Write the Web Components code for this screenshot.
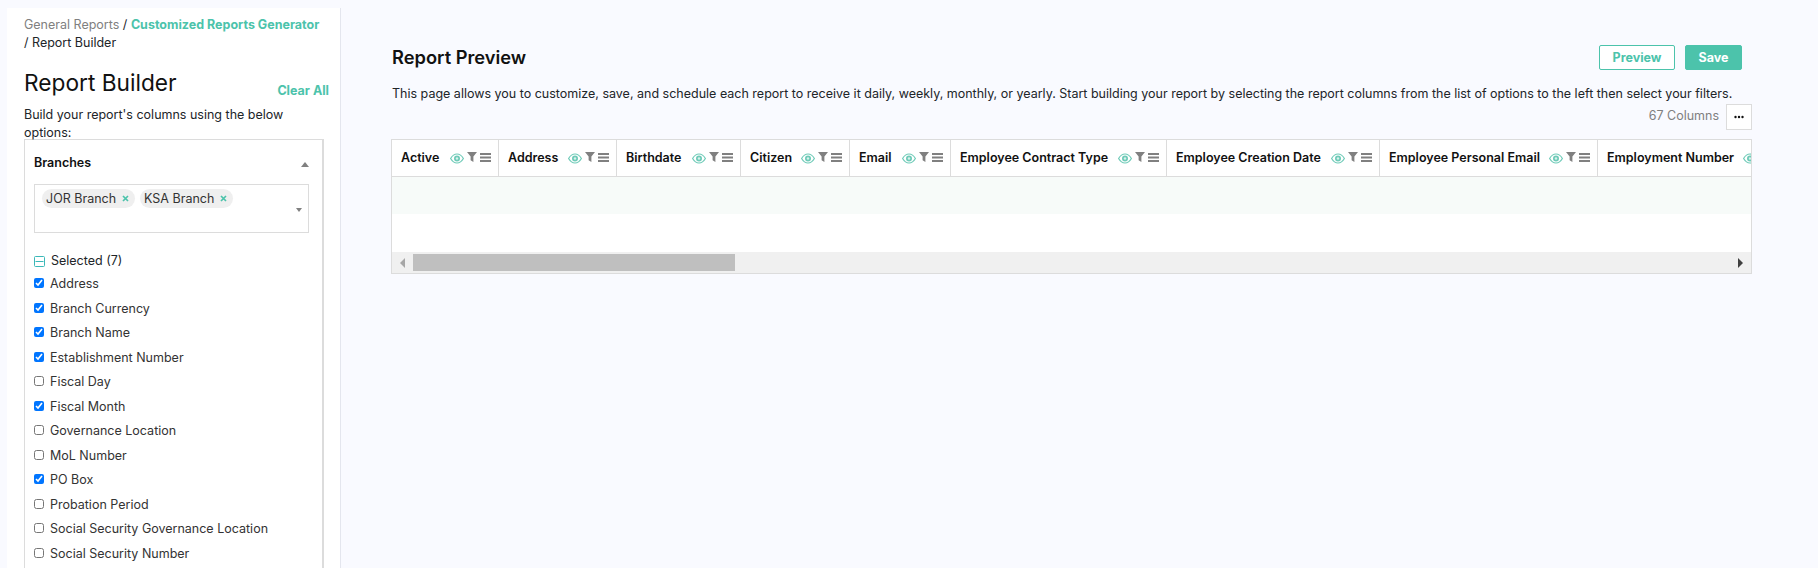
<!DOCTYPE html>
<html>
<head>
<meta charset="utf-8">
<title>Report Builder</title>
<style>
  html, body { height: 100%; overflow: hidden; }
  body {
    margin: 0;
    background: #f9faff;
    color: #212529;
    font: 12.5px/18px Inter, "Liberation Sans", sans-serif;
  }
</style>
</head>
<body>
<report-page>
  <report-sidebar slot="side">
    <field-panel title="Branches">
      <tag-select slot="select">
        <tag-chip>JOR Branch</tag-chip>
        <tag-chip>KSA Branch</tag-chip>
      </tag-select>
      <check-row checked>Address</check-row>
      <check-row checked>Branch Currency</check-row>
      <check-row checked>Branch Name</check-row>
      <check-row checked>Establishment Number</check-row>
      <check-row>Fiscal Day</check-row>
      <check-row checked>Fiscal Month</check-row>
      <check-row>Governance Location</check-row>
      <check-row>MoL Number</check-row>
      <check-row checked>PO Box</check-row>
      <check-row>Probation Period</check-row>
      <check-row>Social Security Governance Location</check-row>
      <check-row>Social Security Number</check-row>
    </field-panel>
  </report-sidebar>
  <report-preview slot="main">
    <report-grid>
      <grid-col w="107">Active</grid-col>
      <grid-col w="118">Address</grid-col>
      <grid-col w="124">Birthdate</grid-col>
      <grid-col w="109">Citizen</grid-col>
      <grid-col w="101">Email</grid-col>
      <grid-col w="216">Employee Contract Type</grid-col>
      <grid-col w="213">Employee Creation Date</grid-col>
      <grid-col w="218">Employee Personal Email</grid-col>
      <grid-col w="194">Employment Number</grid-col>
    </report-grid>
  </report-preview>
</report-page>

<script>
// Halaman utama: sidebar di kiri, preview di kanan
class ReportPage extends HTMLElement {
  constructor() {
    super();
    this.attachShadow({ mode: "open" });
  }

  connectedCallback() {
    this.shadowRoot.innerHTML = `
      <style>
        :host { display: flex; align-items: flex-start; padding: 8px 0 0 7px; }
        .side { flex: 0 0 334px; }
        .main { flex: 1; min-width: 0; padding: 0 66px 0 50px; }
      </style>
      <div class="side"><slot name="side"></slot></div>
      <div class="main"><slot name="main"></slot></div>
    `;
  }
}

class ReportSidebar extends HTMLElement {
  constructor() {
    super();
    this.attachShadow({ mode: "open" });
  }

  connectedCallback() {
    this.shadowRoot.innerHTML = `
      <style>
        :host {
          display: block;
          box-sizing: border-box;
          height: 560px;
          background: #fff;
          border-right: 1px solid #e4e6ee;
          padding: 8px 11px 0 17px;
          overflow: hidden;
        }
        .crumbs { width: 298px; }
        .crumbs .muted { color: #808080; }
        .crumbs b { color: #4cc3ab; font-weight: 700; white-space: nowrap; }
        .head {
          display: flex;
          justify-content: space-between;
          align-items: flex-end;
          margin-top: 13px;
        }
        h1 { margin: 0; font-size: 22.7px; line-height: 36px; font-weight: 400; color: #111; }
        .clear { color: #4cc3ab; font-weight: 700; line-height: 18px; padding-bottom: 1px; }
        p { margin: 5px 0 0; width: 300px; }
      </style>
      <div class="crumbs">
        <span class="muted">General Reports</span> / <b>Customized Reports Generator</b> / Report Builder
      </div>
      <div class="head"><h1>Report Builder</h1><span class="clear">Clear All</span></div>
      <p>Build your report's columns using the below options:</p>
      <slot></slot>
    `;
  }
}

class FieldPanel extends HTMLElement {
  constructor() {
    super();
    this.attachShadow({ mode: "open" });
  }

  connectedCallback() {
    const title = this.getAttribute("title");
    this.shadowRoot.innerHTML = `
      <style>
        :host {
          display: block;
          width: 300px;
          min-height: 480px;
          box-sizing: border-box;
          margin-top: -3px;
          border: 1px solid #dcdcdc;
          border-right-width: 2px;
          padding: 0 13px 0 9px;
        }
        .top {
          display: flex;
          justify-content: space-between;
          align-items: center;
          box-sizing: border-box;
          height: 44px;
          padding-top: 2px;
          font-weight: 600;
          color: #111;
        }
        .up {
          width: 0; height: 0;
          border: 4px solid transparent;
          border-top: 0;
          border-bottom: 5px solid #808080;
          margin-top: 3px;
        }
        .selected {
          display: flex;
          align-items: center;
          gap: 6px;
          height: 18px;
          margin: 19px 0 2px;
        }
        .minus { display: block; }
      </style>
      <div class="top"><span>${title}</span><span class="up"></span></div>
      <slot name="select"></slot>
      <div class="selected">
        <svg class="minus" width="11" height="11" viewBox="0 0 11 11">
          <rect x=".5" y=".5" width="10" height="10" rx="1" fill="none" stroke="#3bb8b8"/>
          <path d="M1.5 5.5h8" stroke="#3bb8b8"/>
        </svg>
        <span>Selected (7)</span>
      </div>
      <slot></slot>
    `;
  }
}

class TagSelect extends HTMLElement {
  constructor() {
    super();
    this.attachShadow({ mode: "open" });
  }

  connectedCallback() {
    this.shadowRoot.innerHTML = `
      <style>
        :host {
          display: flex;
          align-items: flex-start;
          gap: 5px;
          position: relative;
          box-sizing: border-box;
          width: 275px;
          height: 49px;
          border: 1px solid #dcdcdc;
          padding: 4px 7px;
        }
        .caret {
          position: absolute;
          right: 6px;
          top: 23px;
          width: 0; height: 0;
          border: 3px solid transparent;
          border-bottom: 0;
          border-top: 4px solid #808080;
        }
      </style>
      <slot></slot>
      <span class="caret"></span>
    `;
  }
}

class TagChip extends HTMLElement {
  constructor() {
    super();
    this.attachShadow({ mode: "open" });
  }

  connectedCallback() {
    this.shadowRoot.innerHTML = `
      <style>
        :host {
          display: inline-flex;
          align-items: center;
          gap: 6px;
          height: 19px;
          padding: 0 6px 0 4px;
          border-radius: 10px;
          background: #efefef;
          color: #333;
          white-space: nowrap;
        }
        svg { display: block; }
      </style>
      <slot></slot>
      <svg width="7" height="7" viewBox="0 0 7 7">
        <path d="M1 1l5 5M6 1l-5 5" stroke="#4cc3ab" stroke-width="1.7"/>
      </svg>
    `;
  }
}

class CheckRow extends HTMLElement {
  constructor() {
    super();
    this.attachShadow({ mode: "open" });
  }

  connectedCallback() {
    const checked = this.hasAttribute("checked") ? "checked" : "";
    this.shadowRoot.innerHTML = `
      <style>
        :host {
          display: flex;
          align-items: center;
          height: 24.5px;
          gap: 6px;
          color: #333;
        }
        input { width: 10px; height: 10px; margin: 0 0 2px; flex: none; }
      </style>
      <input type="checkbox" ${checked}>
      <span><slot></slot></span>
    `;
  }
}

class ReportPreview extends HTMLElement {
  constructor() {
    super();
    this.attachShadow({ mode: "open" });
  }

  connectedCallback() {
    this.shadowRoot.innerHTML = `
      <style>
        :host { display: block; padding-top: 37px; }
        .head {
          display: flex;
          justify-content: space-between;
          align-items: center;
          padding: 0 10px 0 1px;
        }
        h2 { margin: 0; font-size: 18.3px; line-height: 25px; font-weight: 600; color: #111; }
        .btns { display: flex; gap: 10px; }
        .btn {
          box-sizing: border-box;
          height: 25px;
          display: flex;
          align-items: center;
          justify-content: center;
          border: 1px solid #4cc3ab;
          border-radius: 2px;
          font-weight: 700;
        }
        .preview { width: 76px; color: #4cc3ab; background: #fff; }
        .save { width: 57px; color: #fff; background: #4cc3ab; }
        p { margin: 15px 0 0 1px; white-space: nowrap; color: #212529; }
        .tools {
          display: flex;
          justify-content: flex-end;
          align-items: center;
          gap: 7px;
          height: 26px;
          margin: 1px 0 9px;
          color: #808080;
        }
        .count { padding-bottom: 3px; }
        .more {
          box-sizing: border-box;
          width: 26px;
          height: 26px;
          display: flex;
          align-items: center;
          justify-content: center;
          border: 1px solid #dcdcdc;
          background: #fff;
        }
      </style>
      <div class="head">
        <h2>Report Preview</h2>
        <div class="btns">
          <span class="btn preview">Preview</span>
          <span class="btn save">Save</span>
        </div>
      </div>
      <p>This page allows you to customize, save, and schedule each report to receive it daily, weekly, monthly, or yearly. Start building your report by selecting the report columns from the list of options to the left then select your filters.</p>
      <div class="tools">
        <span class="count">67 Columns</span>
        <span class="more">
          <svg width="10" height="4" viewBox="0 0 10 4">
            <circle cx="1.5" cy="2" r="1.2" fill="#111"/>
            <circle cx="5" cy="2" r="1.2" fill="#111"/>
            <circle cx="8.5" cy="2" r="1.2" fill="#111"/>
          </svg>
        </span>
      </div>
      <slot></slot>
    `;
  }
}

class ReportGrid extends HTMLElement {
  constructor() {
    super();
    this.attachShadow({ mode: "open" });
  }

  connectedCallback() {
    this.shadowRoot.innerHTML = `
      <style>
        :host {
          display: block;
          box-sizing: border-box;
          border: 1px solid #dcdcdc;
          background: #fff;
          overflow: hidden;
        }
        .cols {
          display: flex;
          height: 36px;
          border-bottom: 1px solid #dcdcdc;
          overflow: hidden;
        }
        .row { height: 38px; }
        .row.tint { height: 37px; background: #f7fbf9; }
        .bar {
          display: flex;
          align-items: center;
          height: 21px;
          background: #f0f0f0;
        }
        .arrow {
          flex: 0 0 21px;
          display: flex;
          justify-content: center;
        }
        .left {
          width: 0; height: 0;
          border: 5px solid transparent;
          border-left: 0;
          border-right: 5px solid #a6a6a6;
        }
        .right {
          width: 0; height: 0;
          border: 5px solid transparent;
          border-right: 0;
          border-left: 5px solid #404040;
        }
        .thumb { flex: 0 0 322px; height: 17px; background: #bfbfbf; }
        .track { flex: 1; }
      </style>
      <div class="cols"><slot></slot></div>
      <div class="row tint"></div>
      <div class="row"></div>
      <div class="bar">
        <span class="arrow"><span class="left"></span></span>
        <span class="thumb"></span>
        <span class="track"></span>
        <span class="arrow"><span class="right"></span></span>
      </div>
    `;
  }
}

class GridCol extends HTMLElement {
  constructor() {
    super();
    this.attachShadow({ mode: "open" });
  }

  connectedCallback() {
    const w = this.getAttribute("w");
    this.shadowRoot.innerHTML = `
      <style>
        :host {
          flex: 0 0 ${w}px;
          box-sizing: border-box;
          display: flex;
          align-items: center;
          justify-content: space-between;
          padding: 0 7px 0 9px;
          border-right: 1px solid #dcdcdc;
          font-weight: 600;
          color: #111;
          white-space: nowrap;
        }
        .icons { display: flex; align-items: center; gap: 3px; }
        svg { display: block; }
      </style>
      <span><slot></slot></span>
      <span class="icons">
        <svg width="14" height="11" viewBox="0 0 14 11">
          <path d="M.6 5.5C2.4 2.4 4.6 1 7 1s4.6 1.4 6.4 4.5C11.6 8.6 9.4 10 7 10S2.4 8.6.6 5.5z" fill="none" stroke="#6fcbb8" stroke-width="1.2"/>
          <circle cx="7" cy="5.5" r="3" fill="#6fcbb8"/>
          <circle cx="7" cy="5.5" r="1.2" fill="#d8f2ec"/>
        </svg>
        <svg width="10" height="10" viewBox="0 0 10 10" style="margin-top:-3px">
          <path d="M0 0h10L6.4 4.4V10L3.6 8.2V4.4z" fill="#808080"/>
        </svg>
        <svg width="11" height="9" viewBox="0 0 11 9" style="margin-top:-1px">
          <path d="M0 1h11M0 4.5h11M0 8h11" stroke="#808080" stroke-width="2"/>
        </svg>
      </span>
    `;
  }
}

customElements.define("report-page", ReportPage);
customElements.define("report-sidebar", ReportSidebar);
customElements.define("field-panel", FieldPanel);
customElements.define("tag-select", TagSelect);
customElements.define("tag-chip", TagChip);
customElements.define("check-row", CheckRow);
customElements.define("report-preview", ReportPreview);
customElements.define("report-grid", ReportGrid);
customElements.define("grid-col", GridCol);
</script>
</body>
</html>
